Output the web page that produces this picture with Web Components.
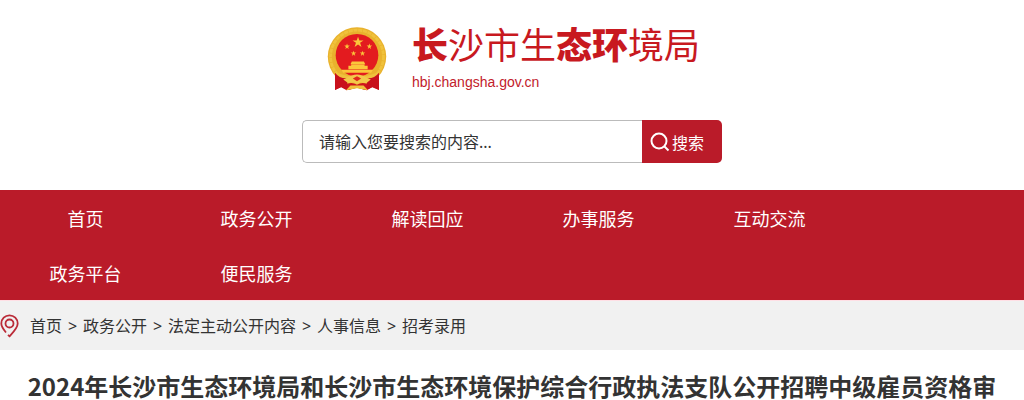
<!DOCTYPE html>
<html lang="zh-CN">
<head>
<meta charset="utf-8">
<title>长沙市生态环境局</title>
<style>
body { margin: 0; background: #fff; color: #333; font-family: "Noto Sans", "Noto Sans CJK SC", sans-serif; font-size: 16px; }
site-logo b { font-weight: 900; }
</style>
</head>
<body>
<site-header>
  <site-logo href="#" domain="hbj.changsha.gov.cn"><b>长</b>沙市生<b>态环</b>境局</site-logo>
  <site-search></site-search>
</site-header>
<site-nav>
  <nav-item>首页</nav-item>
  <nav-item>政务公开</nav-item>
  <nav-item>解读回应</nav-item>
  <nav-item>办事服务</nav-item>
  <nav-item>互动交流</nav-item>
  <nav-item>政务平台</nav-item>
  <nav-item>便民服务</nav-item>
</site-nav>
<bread-crumb>
  <crumb-item>首页</crumb-item>
  <crumb-item>政务公开</crumb-item>
  <crumb-item>法定主动公开内容</crumb-item>
  <crumb-item>人事信息</crumb-item>
  <crumb-item>招考录用</crumb-item>
</bread-crumb>
<article-title>2024年长沙市生态环境局和长沙市生态环境保护综合行政执法支队公开招聘中级雇员资格审</article-title>

<script>
const define = (name, html, setup) => customElements.define(name, class extends HTMLElement {
  constructor() {
    super();
    this.attachShadow({ mode: 'open' }).innerHTML = html;
  }
  connectedCallback() { if (setup) setup(this, this.shadowRoot); }
});

define('site-header', `
<style>
:host { display: block; }
header { display: flex; flex-direction: column; align-items: center; gap: 28px; padding: 24px 0 27px; }
</style>
<header><slot></slot></header>`);

define('national-emblem', `
<style>
:host { display: block; width: 60px; height: 65px; }
svg { display: block; width: 100%; height: 100%; }
</style>
<svg viewBox="21 21 174 189" aria-hidden="true">
  <path d="M46 156 44 204 62 196 78 205 108 198 136 205 152 196 172 204 170 156Z" fill="#c8101c"/>
  <circle cx="108" cy="107" r="85" fill="#e9b22d"/>
  <circle cx="108" cy="107" r="77" fill="none" stroke="#f0c23c" stroke-width="8" stroke-dasharray="12 2"/>
  <circle cx="108" cy="103" r="62" fill="#e31b1f"/>
  <path d="M111 49 115 60 127 60 117 67 121 79 111 72 101 79 105 67 95 60 107 60Z" fill="#fbc63a"/>
  <g fill="#fbc63a">
    <path d="M79 69 81 75 87 75 82 79 84 85 79 81 74 85 76 79 71 75 77 75Z"/>
    <path d="M144 69 146 75 152 75 147 79 149 85 144 81 139 85 141 79 136 75 142 75Z"/>
    <path d="M98 90 100 95 106 95 101 99 103 105 98 101 93 105 95 99 90 95 96 95Z"/>
    <path d="M124 90 126 95 132 95 127 99 129 105 124 101 119 105 121 99 116 95 122 95Z"/>
    <path d="M93 121H128L132 129H89ZM91 130H130V134H139V144H83V134H91ZM62 145H155L149 154H68Z"/>
  </g>
  <path d="M44 151Q80 168 108 161Q136 168 172 151L166 175Q137 188 129 177L108 186 87 177Q75 188 50 175Z" fill="#efc13d"/>
  <path d="M44 154Q58 172 80 170L80 204 62 195 44 204ZM172 154Q158 172 136 170L136 204 154 195 172 204Z" fill="#c8101c"/>
  <path d="M76 170Q94 159 108 159Q122 159 140 170L148 174 134 185 120 181 108 187 96 181 82 184 68 174Z" fill="#f3c94b"/>
  <path d="M96 171 108 164 120 171 108 179Z" fill="#e02a1e"/>
  <path d="M78 187Q94 180 108 189Q122 180 138 187L132 204 108 196 84 204Z" fill="#cf141d"/>
  <path d="M76 205 89 191 108 191 127 191 140 205 108 199Z" fill="#efc13d"/>
</svg>`);

define('site-logo', `
<style>
:host { display: block; }
a { display: flex; align-items: flex-start; gap: 25px; padding-left: 3px; color: #c8191f; text-decoration: none; }
national-emblem { margin-top: 3px; }
.name { display: block; font-size: 36px; line-height: 44px; }
.domain { display: block; font: 14px/16px "Liberation Sans", Arial, sans-serif; padding-top: 6px; color: #c2202b; }
</style>
<a><national-emblem></national-emblem><span><span class="name"><slot></slot></span><span class="domain"></span></span></a>`,
(el, root) => {
  root.querySelector('a').setAttribute('href', el.getAttribute('href'));
  root.querySelector('.domain').textContent = el.getAttribute('domain');
});

define('site-search', `
<style>
:host { display: block; width: 420px; max-width: 100%; }
form { display: flex; height: 43px; }
input { flex: 1; min-width: 0; box-sizing: border-box; border: 1px solid #bbb; border-right: 0; border-radius: 5px 0 0 5px; padding: 0 16px; font: inherit; color: #333; background: #fff; outline: 0; }
input::placeholder { color: #333; opacity: 1; }
button { display: flex; align-items: center; gap: 2px; width: 80px; border: 0; border-radius: 0 5px 5px 0; padding: 0 0 0 8px; background: #ba1b29; color: #fff; font: inherit; }
svg { width: 20px; height: 20px; }
</style>
<form role="search">
  <input type="text" aria-label="搜索内容" placeholder="请输入您要搜索的内容...">
  <button type="button"><svg viewBox="0 0 20 20" fill="none" stroke="#fff" stroke-width="2" aria-hidden="true"><circle cx="9" cy="9" r="7.5"/><path d="M14.5 14.5 18.5 18.5"/></svg>搜索</button>
</form>`);

define('site-nav', `
<style>
:host { display: block; background: #ba1b29; border-bottom: 1px solid #ffdfe5; }
nav { display: grid; grid-template-columns: repeat(auto-fill, minmax(171px, 1fr)); grid-auto-rows: 55px; }
@media (min-width: 900px) { nav { grid-template-columns: repeat(5, 1fr); padding-right: 16.5%; } }
</style>
<nav><slot></slot></nav>`);

define('nav-item', `
<style>
:host { display: block; }
a { display: block; text-align: center; font-size: 18px; line-height: 58px; color: #fff; text-decoration: none; }
</style>
<a href="#"><slot></slot></a>`);

define('bread-crumb', `
<style>
:host { display: block; background: #f1f1f1; }
nav { display: flex; align-items: center; height: 49px; }
svg { width: 20px; height: 24px; margin-right: 10px; }
</style>
<nav aria-label="当前位置">
  <svg viewBox="0 0 20 24" fill="none" stroke="#ba2b38" stroke-width="1.8" aria-hidden="true"><path d="M6 18.500C3.500 15.500 1.300 12.500 1.300 9.500A8.200 8.200 0 0 1 17.700 9.500C17.700 14 12.500 19 9.500 22.300L8 20.800"/><circle cx="9.500" cy="9.500" r="4"/></svg>
  <slot></slot>
</nav>`);

define('crumb-item', `
<style>
:host { display: flex; line-height: 24px; }
a { color: #333; text-decoration: none; }
:host(:not(:last-child))::after { content: ">"; width: 21px; text-align: center; }
</style>
<a href="#"><slot></slot></a>`);

define('article-title', `
<style>
:host { display: block; padding: 22px 20px 0; }
h1 { margin: 0; font: bold 24px/28px "Noto Sans CJK SC", sans-serif; text-align: center; color: #333; }
</style>
<h1><slot></slot></h1>`);
</script>
</body>
</html>
